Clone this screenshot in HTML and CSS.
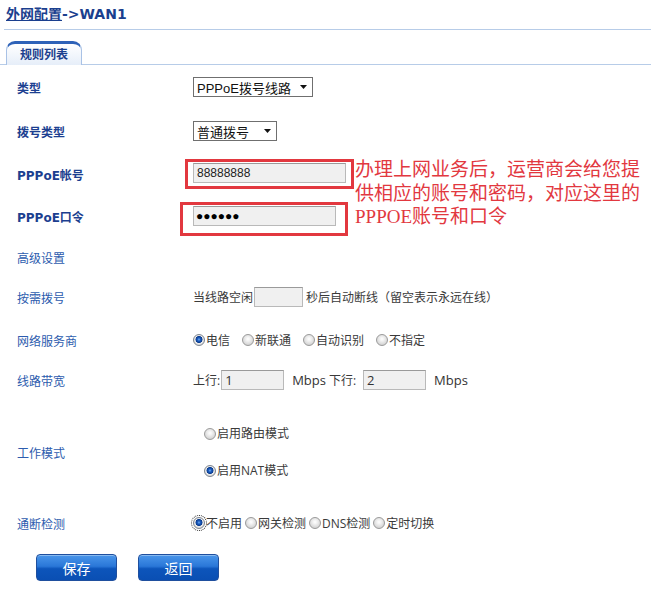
FILE: index.html
```html
<!DOCTYPE html>
<html lang="zh-CN">
<head>
<meta charset="utf-8">
<title>外网配置->WAN1</title>
<link rel="stylesheet" href="styles.css">
</head>
<body>
<div class="page">
  <h1 class="title"><a class="crumb" href="#">外网配置</a>-&gt;WAN1</h1>
  <div class="tabs"><div class="tab">规则列表</div></div>

  <div class="form">
    <div class="row r44">
      <div class="label strong">类型</div>
      <div class="ctrl">
        <div class="select w120"><span>PPPoE拨号线路</span><svg class="arrow" width="7" height="4" viewBox="0 0 7 4"><path d="M0 0H7L3.5 4Z" fill="#111"/></svg></div>
      </div>
    </div>
    <div class="row r44">
      <div class="label strong">拨号类型</div>
      <div class="ctrl">
        <div class="select w84"><span>普通拨号</span><svg class="arrow" width="7" height="4" viewBox="0 0 7 4"><path d="M0 0H7L3.5 4Z" fill="#111"/></svg></div>
      </div>
    </div>
    <div class="row r42">
      <div class="label strong">PPPoE帐号</div>
      <div class="ctrl">
        <span class="mark mark1"><input class="text w153" type="text" value="88888888"></span>
      </div>
    </div>
    <div class="row r42">
      <div class="label strong">PPPoE口令</div>
      <div class="ctrl">
        <span class="mark mark2"><input class="text pass w143" type="text" value="●●●●●●"></span>
      </div>
    </div>
    <div class="row r40">
      <div class="label">高级设置</div>
      <div class="ctrl"></div>
    </div>
    <div class="row r40">
      <div class="label">按需拨号</div>
      <div class="ctrl">当线路空闲<input class="text w49" type="text" value=""><span class="after">秒后自动断线（留空表示永远在线）</span></div>
    </div>
    <div class="row r46">
      <div class="label">网络服务商</div>
      <div class="ctrl">
        <label class="opt"><input class="radio" type="radio" name="isp" checked>电信</label>
        <label class="opt"><input class="radio" type="radio" name="isp">新联通</label>
        <label class="opt"><input class="radio" type="radio" name="isp">自动识别</label>
        <label class="opt"><input class="radio" type="radio" name="isp">不指定</label>
      </div>
    </div>
    <div class="row r34">
      <div class="label">线路带宽</div>
      <div class="ctrl">上行:<input class="text w63 bw" type="text" value="1"><span class="unit">Mbps</span><span class="down">下行:</span><input class="text w63 bw" type="text" value="2"><span class="unit">Mbps</span></div>
    </div>
    <div class="row r110">
      <div class="label">工作模式</div>
      <div class="ctrl modes">
        <label class="mode"><input class="radio" type="radio" name="mode">启用路由模式</label>
        <label class="mode"><input class="radio" type="radio" name="mode" checked>启用NAT模式</label>
      </div>
    </div>
    <div class="row r32">
      <div class="label">通断检测</div>
      <div class="ctrl">
        <label class="opt tight"><input class="radio focus" type="radio" name="chk" checked>不启用</label>
        <label class="opt tight"><input class="radio" type="radio" name="chk">网关检测</label>
        <label class="opt tight"><input class="radio" type="radio" name="chk">DNS检测</label>
        <label class="opt tight"><input class="radio" type="radio" name="chk">定时切换</label>
      </div>
    </div>
  </div>

  <div class="buttons">
    <button class="btn" type="button">保存</button>
    <button class="btn" type="button">返回</button>
  </div>

  <div class="note">办理上网业务后，运营商会给您提<br>供相应的账号和密码，对应这里的<br>PPPOE账号和口令</div>
</div>
</body>
</html>
```

FILE: styles.css
```css
html, body {
  margin: 0;
  padding: 0;
  background: #ffffff;
}

.page {
  position: relative;
  width: 651px;
  height: 592px;
  overflow: hidden;
  font-family: "Noto Sans CJK SC", sans-serif;
  font-size: 12px;
  color: #3a3a3a;
}

.title {
  margin: 0 0 0 4px;
  padding-left: 2px;
  height: 29px;
  line-height: 29px;
  border-bottom: 1px solid #b7cce8;
  font-family: "DejaVu Sans", "Noto Sans CJK SC", sans-serif;
  font-size: 14px;
  font-weight: bold;
  color: #1b3f8e;
}

.crumb {
  color: #1b3f8e;
  text-decoration: underline;
}

.tabs {
  margin-top: 11px;
  padding-left: 6px;
  height: 23px;
  border-bottom: 1px solid #b7cce8;
  display: flex;
  align-items: flex-end;
}

.tab {
  box-sizing: border-box;
  width: 76px;
  height: 24px;
  margin-bottom: -1px;
  border: 1px solid #a9c2e6;
  border-top: 3px solid #2e62b8;
  border-bottom: none;
  border-radius: 9px 9px 0 0;
  background: linear-gradient(#ffffff, #e6eef9);
  text-align: center;
  line-height: 20px;
  font-family: "Noto Sans CJK SC", sans-serif;
  font-size: 12px;
  font-weight: bold;
  color: #1b3f8e;
}

.form {
  padding-left: 17px;
}

.row {
  display: grid;
  grid-template-columns: 176px 1fr;
  align-items: center;
}

.r44 { height: 44px; }
.r42 { height: 42px; }
.r40 { height: 40px; }
.r46 { height: 46px; }
.r34 { height: 34px; }
.r110 { height: 110px; }
.r32 { height: 32px; }

.label {
  font-family: "Noto Sans CJK SC", sans-serif;
  font-size: 12px;
  color: #2d5cae;
}

.label.strong {
  font-family: "DejaVu Sans", "Noto Sans CJK SC", sans-serif;
  font-weight: bold;
  color: #1c3f90;
}

.ctrl {
  display: flex;
  align-items: center;
  white-space: nowrap;
  font-family: "Open Sans", "Noto Sans CJK SC", sans-serif;
  font-size: 12px;
  color: #3a3a3a;
}

.select {
  box-sizing: border-box;
  display: inline-flex;
  align-items: center;
  justify-content: space-between;
  height: 20px;
  padding: 0 5px 0 3px;
  border: 1px solid #6f6f6f;
  background: #ffffff;
  font-family: "Liberation Sans", "Noto Sans CJK SC", sans-serif;
  font-size: 13px;
  color: #111111;
}

.w120 { width: 120px; }
.w84 { width: 84px; }

.arrow {
  flex: none;
}

.text {
  box-sizing: border-box;
  height: 20px;
  margin: 0;
  padding: 0 3px;
  border: 1px solid #b9b9b9;
  border-top-color: #9a9a9a;
  background: #f0f0f0;
  font-family: "Liberation Sans", sans-serif;
  font-size: 12px;
  color: #222222;
  outline: none;
}

.w153 { width: 153px; }
.w143 { width: 143px; }
.w49 { width: 49px; margin-left: 1px; }
.w63 { width: 63px; }

.pass {
  font-size: 12px;
  color: #000000;
  padding-left: 2px;
}

.bw {
  font-family: "Open Sans", sans-serif;
  font-size: 13px;
  color: #333333;
  margin-left: 1px;
}

.mark {
  display: inline-block;
  border: 3px solid #e2383f;
  line-height: 0;
}

.mark1 {
  margin-left: -8px;
  padding: 1px 5px 3px 5px;
}

.mark2 {
  margin-left: -13px;
  margin-top: 6px;
  padding: 1px 9px 7px 10px;
}

.after {
  margin-left: 3px;
}

.opt {
  display: inline-flex;
  align-items: center;
  margin-right: 12px;
}

.opt.tight {
  margin-right: 3px;
}

.radio {
  -webkit-appearance: none;
  appearance: none;
  box-sizing: border-box;
  width: 12px;
  height: 12px;
  margin: 0 1px 0 0;
  border: 1px solid #9a9a9a;
  border-radius: 50%;
  background: radial-gradient(circle at 50% 40%, #ffffff 0, #f2f2f2 2px, #d2d2d2 6px);
  flex: none;
}

.radio:checked {
  border-color: #7d8590;
  background: radial-gradient(circle at 50% 45%, #6fb0f5 0, #1c5cc0 1.5px, #0b3c8e 3.2px, #eeeeee 3.8px, #d0d0d0 6px);
}

.radio.focus {
  outline: 1px dotted #222222;
  outline-offset: 1px;
}

.unit {
  margin-left: 8px;
  font-size: 13px;
  color: #333333;
}

.down {
  margin-left: 3px;
  margin-right: 6px;
}

.modes {
  flex-direction: column;
  align-items: flex-start;
  gap: 21px;
  padding-left: 11px;
}

.mode {
  display: inline-flex;
  align-items: center;
  line-height: 16px;
}

.buttons {
  display: flex;
  gap: 21px;
  padding-left: 36px;
  margin-top: 15px;
}

.btn {
  box-sizing: border-box;
  width: 81px;
  height: 27px;
  margin: 0;
  padding: 0;
  border: 1px solid #1f4f9e;
  border-radius: 4px;
  background: linear-gradient(#4a96ea 0%, #2a77d8 45%, #0d55bb 55%, #0a4fb3 100%);
  box-shadow: inset 0 1px 0 rgba(255, 255, 255, 0.35);
  font-family: "Noto Sans CJK SC", sans-serif;
  font-size: 14px;
  color: #ffffff;
  cursor: pointer;
}

.note {
  position: absolute;
  left: 355px;
  top: 158px;
  font-family: "Liberation Serif", "Noto Sans CJK SC", serif;
  font-size: 19px;
  line-height: 23.5px;
  color: #e2383f;
  white-space: nowrap;
}
```
